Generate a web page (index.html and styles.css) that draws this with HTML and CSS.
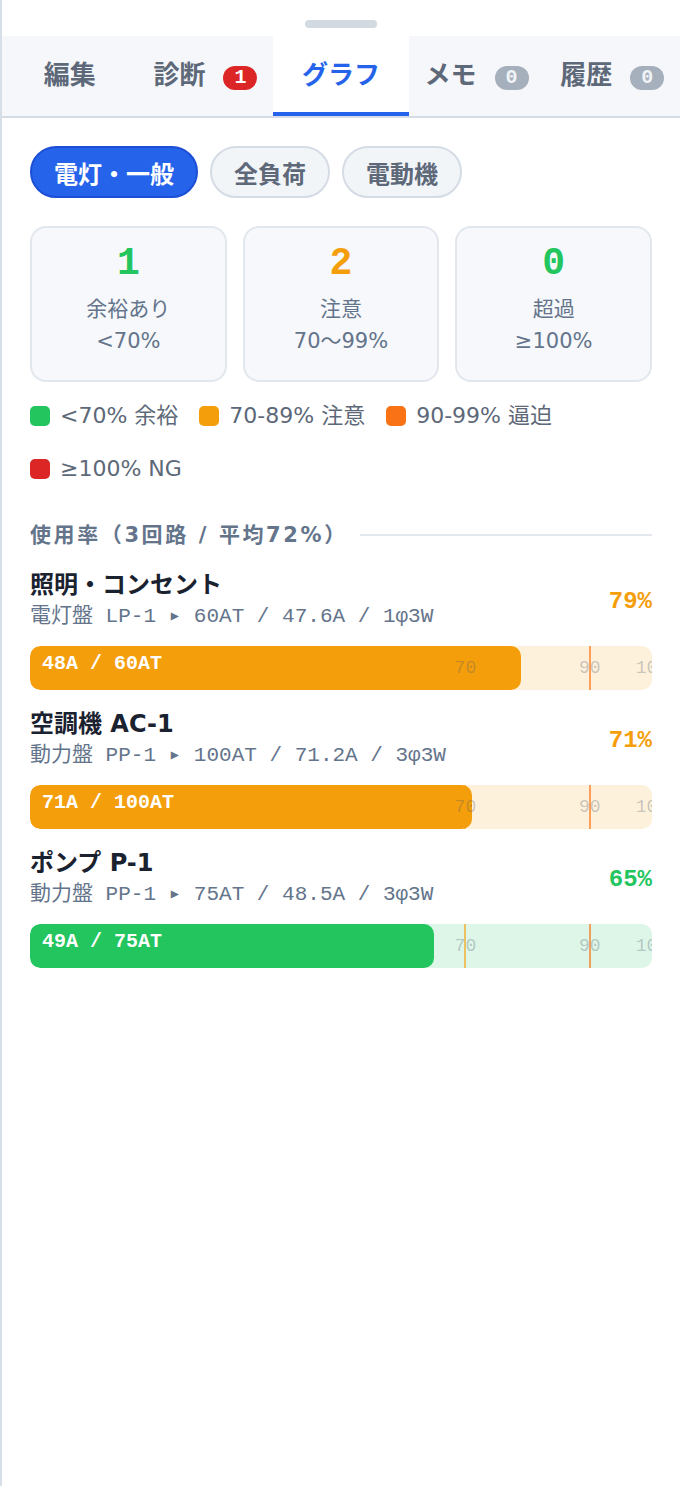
FILE: index.html
```html
<!DOCTYPE html>
<html lang="ja">
<head>
    <meta charset="UTF-8">
    <meta name="viewport" content="width=device-width, initial-scale=1.0">
    <title>負荷グラフ</title>
    <link rel="stylesheet" href="styles.css">
</head>
<body>
    <div class="sheet">
        <div class="handle-wrap"><div class="handle"></div></div>

        <nav class="tabs">
            <div class="tab">編集</div>
            <div class="tab">診断<span class="badge badge-red">1</span></div>
            <div class="tab active">グラフ</div>
            <div class="tab">メモ<span class="badge badge-gray">0</span></div>
            <div class="tab">履歴<span class="badge badge-gray">0</span></div>
        </nav>

        <main class="content">
            <div class="filters">
                <button class="pill active">電灯・一般</button>
                <button class="pill">全負荷</button>
                <button class="pill">電動機</button>
            </div>

            <div class="stats">
                <div class="stat">
                    <div class="stat-num ok">1</div>
                    <div class="stat-label">余裕あり</div>
                    <div class="stat-range">&lt;70%</div>
                </div>
                <div class="stat">
                    <div class="stat-num warn">2</div>
                    <div class="stat-label">注意</div>
                    <div class="stat-range">70〜99%</div>
                </div>
                <div class="stat">
                    <div class="stat-num ok">0</div>
                    <div class="stat-label">超過</div>
                    <div class="stat-range">≥100%</div>
                </div>
            </div>

            <div class="legend">
                <div class="legend-item"><span class="dot dot-green"></span>&lt;70% 余裕</div>
                <div class="legend-item"><span class="dot dot-amber"></span>70-89% 注意</div>
                <div class="legend-item"><span class="dot dot-orange"></span>90-99% 逼迫</div>
                <div class="legend-item"><span class="dot dot-red"></span>≥100% NG</div>
            </div>

            <div class="section-head">
                <span>使用率（3回路 / 平均72%）</span>
                <div class="rule"></div>
            </div>

            <div class="loads">
                <div class="load">
                    <div class="load-head">
                        <div>
                            <div class="load-name">照明・コンセント</div>
                            <div class="load-sub">電灯盤 LP-1 ▸ 60AT / 47.6A / 1φ3W</div>
                        </div>
                        <div class="load-pct warn">79%</div>
                    </div>
                    <div class="bar bar-amber">
                        <div class="fill" style="width: 79%"></div>
                        <div class="tick tick-70"></div>
                        <div class="tick tick-90"></div>
                        <span class="tick-label at-70">70</span>
                        <span class="tick-label at-90">90</span>
                        <span class="tick-label at-100">100</span>
                        <span class="bar-text">48A / 60AT</span>
                    </div>
                </div>

                <div class="load">
                    <div class="load-head">
                        <div>
                            <div class="load-name">空調機 AC-1</div>
                            <div class="load-sub">動力盤 PP-1 ▸ 100AT / 71.2A / 3φ3W</div>
                        </div>
                        <div class="load-pct warn">71%</div>
                    </div>
                    <div class="bar bar-amber">
                        <div class="fill" style="width: 71%"></div>
                        <div class="tick tick-70"></div>
                        <div class="tick tick-90"></div>
                        <span class="tick-label at-70">70</span>
                        <span class="tick-label at-90">90</span>
                        <span class="tick-label at-100">100</span>
                        <span class="bar-text">71A / 100AT</span>
                    </div>
                </div>

                <div class="load">
                    <div class="load-head">
                        <div>
                            <div class="load-name">ポンプ P-1</div>
                            <div class="load-sub">動力盤 PP-1 ▸ 75AT / 48.5A / 3φ3W</div>
                        </div>
                        <div class="load-pct ok">65%</div>
                    </div>
                    <div class="bar bar-green">
                        <div class="fill" style="width: 65%"></div>
                        <div class="tick tick-70"></div>
                        <div class="tick tick-90"></div>
                        <span class="tick-label at-70">70</span>
                        <span class="tick-label at-90">90</span>
                        <span class="tick-label at-100">100</span>
                        <span class="bar-text">49A / 75AT</span>
                    </div>
                </div>
            </div>
        </main>
    </div>
</body>
</html>
```

FILE: styles.css
```css
body {
    margin: 0;
    background: #fff;
    font-family: "DejaVu Sans", "Noto Sans CJK JP", sans-serif;
    color: #1a2230;
}

.sheet {
    min-height: 100vh;
    border-left: 2px solid #d6dee8;
    background: #fff;
}

.handle-wrap {
    height: 36px;
    display: flex;
    justify-content: center;
    align-items: flex-start;
}

.handle {
    margin-top: 20px;
    width: 72px;
    height: 8px;
    border-radius: 4px;
    background: #d3d9e1;
}

/* Tabs */
.tabs {
    display: grid;
    grid-template-columns: repeat(5, 1fr);
    height: 80px;
    background: #f5f7fa;
    border-bottom: 2px solid #d5dce5;
}

.tab {
    display: flex;
    align-items: center;
    justify-content: center;
    padding-bottom: 7px;
    font-family: "Noto Sans CJK JP", sans-serif;
    font-size: 26px;
    font-weight: 700;
    color: #5d6878;
}

.tab.active {
    background: #fff;
    color: #2563eb;
    box-shadow: inset 0 -4px 0 #2563eb;
}

.badge {
    margin-left: 18px;
    margin-top: 11px;
    height: 24px;
    padding: 0 11px;
    border-radius: 12px;
    font-family: "Liberation Mono", monospace;
    font-size: 20px;
    font-weight: 700;
    line-height: 24px;
    color: #fff;
}

.badge-red {
    background: #dc2626;
}

.badge-gray {
    background: #a6afbc;
    color: #f1f4f7;
}

.content {
    padding: 28px 28px 40px;
}

/* Filter pills */
.filters {
    display: flex;
    gap: 12px;
}

.pill {
    height: 52px;
    padding: 0 22px;
    border: 2px solid #d5dce5;
    border-radius: 26px;
    background: #f2f5f8;
    font-family: "Noto Sans CJK JP", sans-serif;
    font-size: 24px;
    font-weight: 700;
    color: #5d6878;
}

.pill.active {
    background: #2563eb;
    border-color: #1d4fd6;
    color: #fff;
}

/* Summary cards */
.stats {
    display: grid;
    grid-template-columns: repeat(3, 1fr);
    gap: 16px;
    margin-top: 28px;
}

.stat {
    border: 2px solid #e2e7ee;
    border-radius: 16px;
    background: #f6f8fb;
    padding: 16px 0 23px;
    text-align: center;
}

.stat-num {
    font-family: "Liberation Mono", monospace;
    font-size: 38px;
    font-weight: 700;
    line-height: 40px;
    margin-bottom: 9px;
}

.stat-label,
.stat-range {
    font-size: 21px;
    line-height: 32px;
    color: #64748b;
}

.ok { color: #22c55e; }
.warn { color: #f59e0b; }

/* Legend */
.legend {
    display: flex;
    flex-wrap: wrap;
    column-gap: 21px;
    row-gap: 19px;
    margin-top: 17px;
}

.legend-item {
    display: flex;
    align-items: center;
    gap: 10px;
    font-size: 22px;
    line-height: 34px;
    color: #5d6878;
}

.dot {
    width: 20px;
    height: 20px;
    border-radius: 5px;
}

.dot-green { background: #22c55e; }
.dot-amber { background: #f59e0b; }
.dot-orange { background: #f97316; }
.dot-red { background: #dc2626; }

/* Section heading */
.section-head {
    display: flex;
    align-items: center;
    gap: 12px;
    margin-top: 33px;
    font-size: 21px;
    font-weight: 700;
    line-height: 32px;
    letter-spacing: 2.6px;
    color: #64748b;
}

.rule {
    flex: 1;
    height: 2px;
    background: #e3e8ee;
}

/* Load rows */
.load {
    margin-top: 18px;
}

.load + .load {
    margin-top: 18px;
}

.load-head {
    display: flex;
    justify-content: space-between;
    align-items: center;
}

.load-name {
    font-size: 24px;
    font-weight: 700;
    line-height: 32px;
    color: #1a2230;
}

.load-sub {
    font-family: "Liberation Mono", "Noto Sans CJK JP", monospace;
    font-size: 21px;
    line-height: 32px;
    color: #64748b;
}

.load-pct {
    font-family: "Liberation Mono", monospace;
    font-size: 24px;
    font-weight: 700;
}

.bar {
    position: relative;
    height: 44px;
    margin-top: 13px;
    border-radius: 10px;
    overflow: hidden;
}

.bar-amber { background: rgba(245, 158, 11, 0.15); }
.bar-green { background: rgba(34, 197, 94, 0.15); }

.fill {
    height: 100%;
    border-radius: 10px;
}

.bar-amber .fill { background: #f59e0b; }
.bar-green .fill { background: #22c55e; }

.tick {
    position: absolute;
    top: 0;
    bottom: 0;
    width: 2px;
    margin-left: -1px;
}

.tick-70 {
    left: 70%;
    background: rgba(245, 158, 11, 0.6);
}

.tick-90 {
    left: 90%;
    background: rgba(249, 115, 22, 0.65);
}

/* the 100 mark sits on the bar's edge and is clipped by it */
.tick-label {
    position: absolute;
    top: 0;
    line-height: 44px;
    transform: translateX(-50%);
    font-family: "Liberation Mono", monospace;
    font-size: 18px;
    color: rgba(71, 85, 105, 0.3);
}

.at-70 { left: 70%; }
.at-90 { left: 90%; }
.at-100 { left: 100%; }

.bar-text {
    position: absolute;
    left: 12px;
    top: 6px;
    line-height: 24px;
    font-family: "Liberation Mono", monospace;
    font-size: 20px;
    font-weight: 700;
    color: #fff;
}
```
